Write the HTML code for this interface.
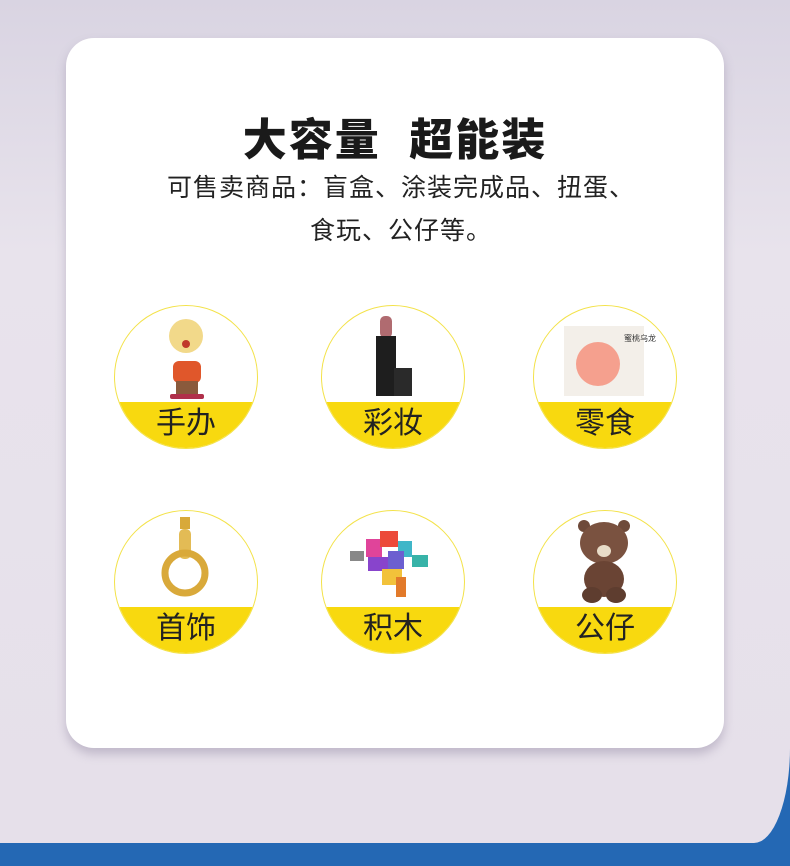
<!DOCTYPE html>
<html><head><meta charset="utf-8"><style>
body{margin:0;width:790px;height:866px;overflow:hidden;position:relative;background:#e6e0ea;font-family:"Liberation Sans","Noto Sans CJK SC",sans-serif}
.bg{position:absolute;left:0;top:0;width:790px;height:843px;background:linear-gradient(180deg,#d9d4e2 0%,#e8e3ec 30%,#e6e0ea 100%);border-bottom-right-radius:36px 95px}
.blue{position:absolute;left:0;top:843px;width:790px;height:23px;background:#2468b4}
.bc{position:absolute;left:700px;top:740px;width:90px;height:126px;background:#2468b4}
.card{position:absolute;left:66px;top:38px;width:658px;height:710px;background:#fff;border-radius:28px;box-shadow:0 6px 10px rgba(120,110,140,.35)}
h1{position:absolute;top:104px;left:0;width:790px;text-align:center;margin:0;font-size:44px;font-weight:900;color:#1a1a1a;letter-spacing:2px}
.sub{position:absolute;left:6px;width:790px;text-align:center;font-size:25px;color:#222;letter-spacing:1px}
.c{position:absolute;width:142px;height:142px;border:1.5px solid #f3e24a;border-radius:50%;overflow:hidden;background:#fff}
.c .y{position:absolute;left:0;right:0;bottom:0;height:46px;background:#f8d90f;text-align:center;font-size:30px;line-height:44px;color:#222}
.c svg{position:absolute;left:0;top:0}
</style></head><body>
<div class="blue"></div><div class="bc"></div><div class="bg"></div>
<div class="card"></div>
<h1>大容量&nbsp;&nbsp;超能装</h1>
<div class="sub" style="top:168px">可售卖商品：盲盒、涂装完成品、扭蛋、</div>
<div class="sub" style="top:211px">食玩、公仔等。</div>

<div class="c" style="left:114px;top:305px"><svg width="142" height="100"><circle cx="71" cy="30" r="17" fill="#f2d98a"/><circle cx="71" cy="38" r="4" fill="#c0392b"/><rect x="58" y="55" width="28" height="22" rx="6" fill="#e0572b"/><rect x="61" y="75" width="22" height="15" fill="#8a5a3c"/><rect x="55" y="88" width="34" height="5" rx="2" fill="#b0304a"/></svg><div class="y">手办</div></div>
<div class="c" style="left:321px;top:305px"><svg width="142" height="100"><rect x="58" y="10" width="12" height="22" rx="5" fill="#b06b70"/><rect x="54" y="30" width="20" height="60" fill="#1e1e1e"/><rect x="72" y="62" width="18" height="28" fill="#2a2a2a"/></svg><div class="y">彩妆</div></div>
<div class="c" style="left:533px;top:305px"><svg width="142" height="100"><rect x="30" y="20" width="80" height="70" fill="#f3efe9"/><circle cx="64" cy="58" r="22" fill="#f5a08e"/><text x="90" y="35" font-size="8" fill="#333">蜜桃乌龙</text></svg><div class="y">零食</div></div>

<div class="c" style="left:114px;top:510px"><svg width="142" height="100"><rect x="65" y="6" width="10" height="12" fill="#d8a93a"/><rect x="64" y="18" width="12" height="30" rx="5" fill="#e3bb55"/><circle cx="70" cy="62" r="20" fill="none" stroke="#d9a93a" stroke-width="7"/></svg><div class="y">首饰</div></div>
<div class="c" style="left:321px;top:510px"><svg width="142" height="100"><rect x="28" y="40" width="14" height="10" fill="#888"/><rect x="44" y="28" width="16" height="18" fill="#e0449a"/><rect x="58" y="20" width="18" height="16" fill="#ec4a3a"/><rect x="76" y="30" width="14" height="16" fill="#3fb6c8"/><rect x="46" y="46" width="20" height="14" fill="#8844cc"/><rect x="66" y="40" width="16" height="18" fill="#6c5fd0"/><rect x="90" y="44" width="16" height="12" fill="#37b3a8"/><rect x="60" y="58" width="20" height="16" fill="#f2c23a"/><rect x="74" y="66" width="10" height="20" fill="#e27a2a"/></svg><div class="y">积木</div></div>
<div class="c" style="left:533px;top:510px"><svg width="142" height="100"><circle cx="50" cy="15" r="6" fill="#6e4a3a"/><circle cx="90" cy="15" r="6" fill="#6e4a3a"/><ellipse cx="70" cy="32" rx="24" ry="21" fill="#7a5240"/><ellipse cx="70" cy="40" rx="7" ry="6" fill="#e8dcc8"/><ellipse cx="70" cy="68" rx="20" ry="18" fill="#6a4434"/><ellipse cx="58" cy="84" rx="10" ry="8" fill="#5e3d2f"/><ellipse cx="82" cy="84" rx="10" ry="8" fill="#5e3d2f"/></svg><div class="y">公仔</div></div>
</body></html>
